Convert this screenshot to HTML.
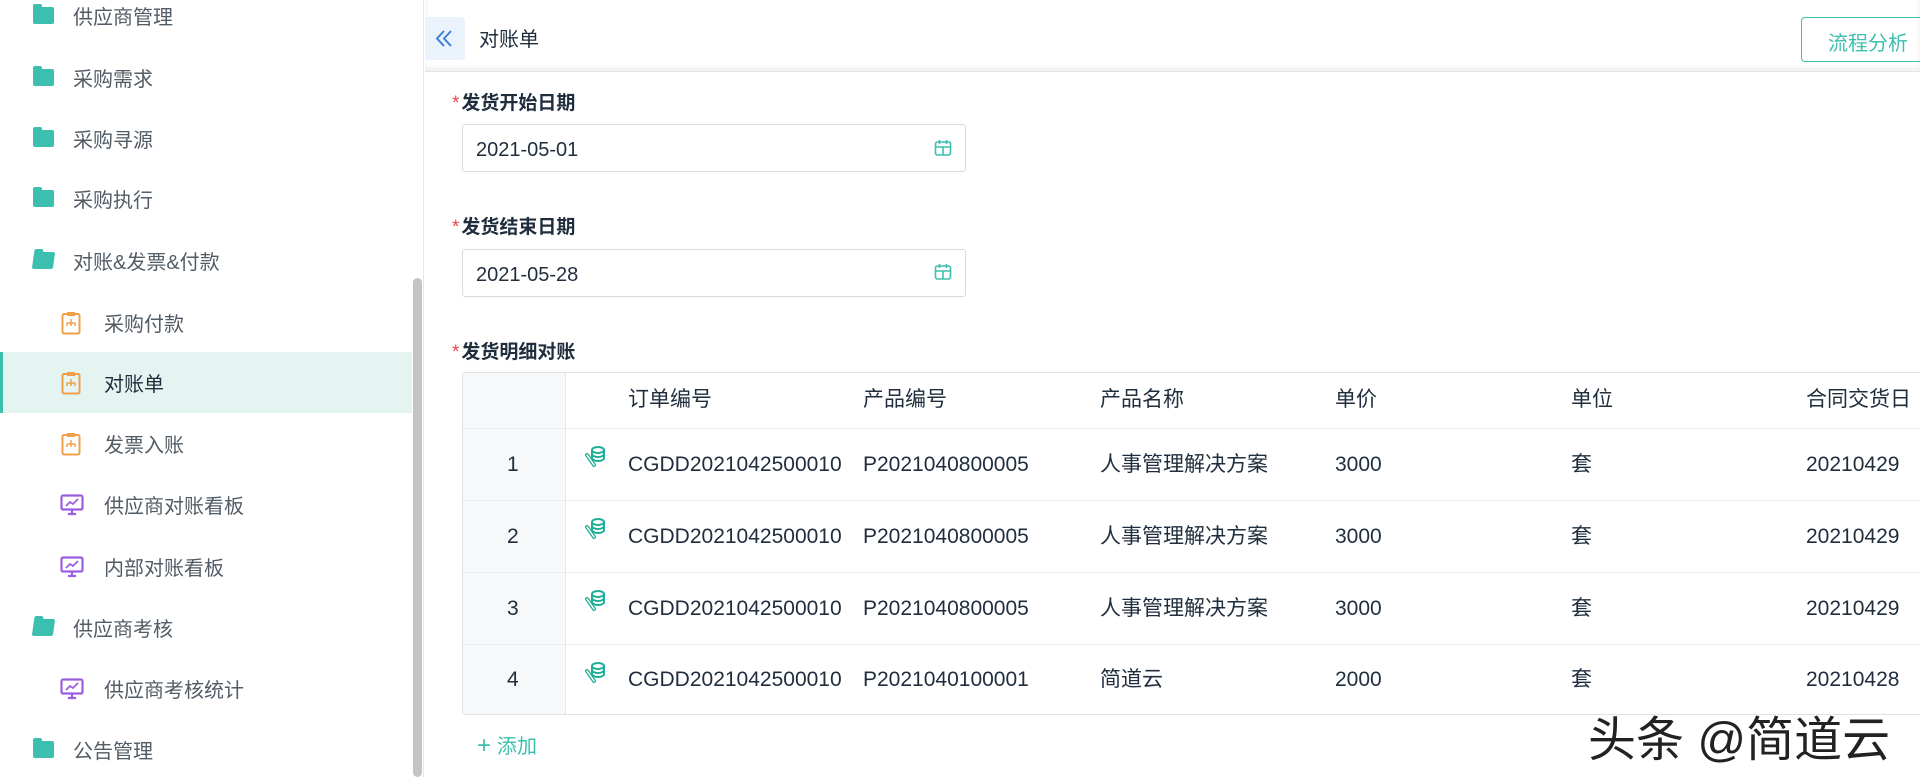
<!DOCTYPE html>
<html><head><meta charset="utf-8"><style>
*{margin:0;padding:0;box-sizing:border-box}
body{width:1920px;height:777px;overflow:hidden;background:#fff;font-family:"Liberation Sans","Noto Sans CJK SC",sans-serif;color:#1f2d3d;position:relative}
.a{position:absolute;white-space:nowrap}
.side{left:0;top:0;width:424px;height:777px;border-right:1px solid #e4e7eb;background:#fff}
.it{position:absolute;left:0;width:412px;height:61px;display:flex;align-items:center;font-size:20px;color:#525c66}
.fold{position:absolute;left:33px;width:21px;height:17px;background:#3cbfae;border-radius:2px}
.fold:before{content:"";position:absolute;left:0;top:-3px;width:9px;height:4px;background:#3cbfae;border-radius:2px 2px 0 0}
.lbl{font-size:19px;font-weight:bold;color:#1f2d3d}
.lbl b{color:#e5484d;font-weight:normal;margin-right:2px}
.inp{left:462px;width:504px;height:48px;border:1px solid #d7dbe0;border-radius:3px;font-size:20px;padding:4px 0 0 13px;display:flex;align-items:center;color:#1f2d3d}
.cell{position:absolute;font-size:21px;line-height:26px;height:26px;color:#1f2d3d}
</style></head><body>
<div class="a side">
 <div class="it" style="top:-15px"><span class="fold"></span><span style="margin-left:73px">供应商管理</span></div>
 <div class="it" style="top:47px"><span class="fold"></span><span style="margin-left:73px">采购需求</span></div>
 <div class="it" style="top:108px"><span class="fold"></span><span style="margin-left:73px">采购寻源</span></div>
 <div class="it" style="top:168px"><span class="fold"></span><span style="margin-left:73px">采购执行</span></div>
 <div class="it" style="top:230px"><span class="fold" style="transform:skewX(-8deg)"></span><span style="margin-left:73px">对账&amp;发票&amp;付款</span></div>
 <div class="it" style="top:292px"><svg style="position:absolute;left:61px" width="20" height="24" viewBox="0 0 20 24"><rect x="1.5" y="3" width="17" height="19.5" rx="1.5" fill="none" stroke="#f0a04b" stroke-width="2"/><rect x="6" y="1" width="8" height="4" fill="#f0a04b"/><path d="M10 8v4M6 12h8M6 12v3M10 12v3M14 12v3" stroke="#f0a04b" stroke-width="1.5"/></svg><span style="margin-left:104px">采购付款</span></div>
 <div class="it" style="top:352px;background:#e4f4f1;border-left:3px solid #3cbfae;width:412px"><svg style="position:absolute;left:58px" width="20" height="24" viewBox="0 0 20 24"><rect x="1.5" y="3" width="17" height="19.5" rx="1.5" fill="none" stroke="#f0a04b" stroke-width="2"/><rect x="6" y="1" width="8" height="4" fill="#f0a04b"/><path d="M10 8v4M6 12h8M6 12v3M10 12v3M14 12v3" stroke="#f0a04b" stroke-width="1.5"/></svg><span style="margin-left:101px;color:#1f2d3d">对账单</span></div>
 <div class="it" style="top:413px"><svg style="position:absolute;left:61px" width="20" height="24" viewBox="0 0 20 24"><rect x="1.5" y="3" width="17" height="19.5" rx="1.5" fill="none" stroke="#f0a04b" stroke-width="2"/><rect x="6" y="1" width="8" height="4" fill="#f0a04b"/><path d="M10 8v4M6 12h8M6 12v3M10 12v3M14 12v3" stroke="#f0a04b" stroke-width="1.5"/></svg><span style="margin-left:104px">发票入账</span></div>
 <div class="it" style="top:474px"><svg style="position:absolute;left:60px" width="24" height="22" viewBox="0 0 24 22"><rect x="1.5" y="1.5" width="21" height="14" rx="1.5" fill="none" stroke="#9a5fe0" stroke-width="2.2"/><path d="M6 12l4-4 3 2 5-5" fill="none" stroke="#9a5fe0" stroke-width="1.8"/><path d="M8 20h8M12 16v4" stroke="#9a5fe0" stroke-width="2.2"/></svg><span style="margin-left:104px">供应商对账看板</span></div>
 <div class="it" style="top:536px"><svg style="position:absolute;left:60px" width="24" height="22" viewBox="0 0 24 22"><rect x="1.5" y="1.5" width="21" height="14" rx="1.5" fill="none" stroke="#9a5fe0" stroke-width="2.2"/><path d="M6 12l4-4 3 2 5-5" fill="none" stroke="#9a5fe0" stroke-width="1.8"/><path d="M8 20h8M12 16v4" stroke="#9a5fe0" stroke-width="2.2"/></svg><span style="margin-left:104px">内部对账看板</span></div>
 <div class="it" style="top:597px"><span class="fold" style="transform:skewX(-8deg)"></span><span style="margin-left:73px">供应商考核</span></div>
 <div class="it" style="top:658px"><svg style="position:absolute;left:60px" width="24" height="22" viewBox="0 0 24 22"><rect x="1.5" y="1.5" width="21" height="14" rx="1.5" fill="none" stroke="#9a5fe0" stroke-width="2.2"/><path d="M6 12l4-4 3 2 5-5" fill="none" stroke="#9a5fe0" stroke-width="1.8"/><path d="M8 20h8M12 16v4" stroke="#9a5fe0" stroke-width="2.2"/></svg><span style="margin-left:104px">供应商考核统计</span></div>
 <div class="it" style="top:719px"><span class="fold"></span><span style="margin-left:73px">公告管理</span></div>
 <div class="a" style="left:413px;top:278px;width:9px;height:499px;background:#c4c4c4;border-radius:5px"></div>
</div>
<div class="a" style="left:425px;top:0;width:1495px;height:72px;border-bottom:1px solid #e2e5e8;box-shadow:0 -3px 6px #f0f0f0 inset"></div>
<div class="a" style="left:425px;top:17px;width:40px;height:43px;background:#eaf3fb;border-radius:3px"><svg width="40" height="43" viewBox="0 0 40 43"><path d="M19 14l-7 7.5 7 7.5M26 14l-7 7.5 7 7.5" fill="none" stroke="#3d7fd6" stroke-width="2"/></svg></div>
<div class="a" style="left:479px;top:23px;font-size:20px;color:#1f2d3d">对账单</div>
<div class="a" style="left:1801px;top:17px;width:125px;height:45px;border:1.5px solid #3cbfae;border-radius:4px;color:#3cbfae;font-size:20px;padding:9px 0 0 26px">流程分析</div>

<div class="a lbl" style="left:452px;top:88px"><b>*</b>发货开始日期</div>
<div class="a inp" style="top:124px">2021-05-01</div>
<div class="a lbl" style="left:452px;top:212px"><b>*</b>发货结束日期</div>
<div class="a inp" style="top:249px">2021-05-28</div>
<svg class="a" style="left:934px;top:139px" width="18" height="18" viewBox="0 0 18 18"><rect x="1.5" y="3" width="15" height="13" rx="2" fill="none" stroke="#3cbfae" stroke-width="1.6"/><path d="M1.5 8h15M9 8v8M5.5 1v4M12.5 1v4" stroke="#3cbfae" stroke-width="1.6"/></svg>
<svg class="a" style="left:934px;top:263px" width="18" height="18" viewBox="0 0 18 18"><rect x="1.5" y="3" width="15" height="13" rx="2" fill="none" stroke="#3cbfae" stroke-width="1.6"/><path d="M1.5 8h15M9 8v8M5.5 1v4M12.5 1v4" stroke="#3cbfae" stroke-width="1.6"/></svg>
<div class="a lbl" style="left:452px;top:337px"><b>*</b>发货明细对账</div>

<div class="a" style="left:462px;top:372px;width:1470px;height:343px;border:1px solid #dfe2e6;border-radius:3px;overflow:hidden">
 <div class="a" style="left:0;top:0;width:103px;height:343px;background:#f7f8fa;border-right:1px solid #e6e8eb"></div>
 <div class="a" style="left:0;top:55px;width:1470px;border-top:1px solid #eceef0"></div>
 <div class="a" style="left:0;top:127px;width:1470px;border-top:1px solid #eceef0"></div>
 <div class="a" style="left:0;top:199px;width:1470px;border-top:1px solid #eceef0"></div>
 <div class="a" style="left:0;top:271px;width:1470px;border-top:1px solid #eceef0"></div>
</div>
<div class="cell" style="left:628px;top:387px">订单编号</div>
<div class="cell" style="left:863px;top:387px">产品编号</div>
<div class="cell" style="left:1100px;top:387px">产品名称</div>
<div class="cell" style="left:1335px;top:387px">单价</div>
<div class="cell" style="left:1571px;top:387px">单位</div>
<div class="cell" style="left:1806px;top:387px">合同交货日</div>

<div class="cell" style="left:507px;top:452px">1</div>
<div class="cell" style="left:507px;top:524px">2</div>
<div class="cell" style="left:507px;top:596px">3</div>
<div class="cell" style="left:507px;top:667px">4</div>

<svg class="a" style="left:585px;top:445px" width="22" height="24" viewBox="0 0 22 24"><ellipse cx="13" cy="5" rx="6" ry="3" fill="none" stroke="#1fae96" stroke-width="2"/><path d="M7 5v8c0 1.7 2.7 3 6 3s6-1.3 6-3V5M7 9c0 1.7 2.7 3 6 3s6-1.3 6-3" fill="none" stroke="#1fae96" stroke-width="2"/><path d="M2 10l7 10" stroke="#1fae96" stroke-width="4" stroke-linecap="round"/><path d="M2 10l7 10" stroke="#fff" stroke-width="1.5" stroke-linecap="round"/></svg>
<svg class="a" style="left:585px;top:517px" width="22" height="24" viewBox="0 0 22 24"><ellipse cx="13" cy="5" rx="6" ry="3" fill="none" stroke="#1fae96" stroke-width="2"/><path d="M7 5v8c0 1.7 2.7 3 6 3s6-1.3 6-3V5M7 9c0 1.7 2.7 3 6 3s6-1.3 6-3" fill="none" stroke="#1fae96" stroke-width="2"/><path d="M2 10l7 10" stroke="#1fae96" stroke-width="4" stroke-linecap="round"/><path d="M2 10l7 10" stroke="#fff" stroke-width="1.5" stroke-linecap="round"/></svg>
<svg class="a" style="left:585px;top:589px" width="22" height="24" viewBox="0 0 22 24"><ellipse cx="13" cy="5" rx="6" ry="3" fill="none" stroke="#1fae96" stroke-width="2"/><path d="M7 5v8c0 1.7 2.7 3 6 3s6-1.3 6-3V5M7 9c0 1.7 2.7 3 6 3s6-1.3 6-3" fill="none" stroke="#1fae96" stroke-width="2"/><path d="M2 10l7 10" stroke="#1fae96" stroke-width="4" stroke-linecap="round"/><path d="M2 10l7 10" stroke="#fff" stroke-width="1.5" stroke-linecap="round"/></svg>
<svg class="a" style="left:585px;top:661px" width="22" height="24" viewBox="0 0 22 24"><ellipse cx="13" cy="5" rx="6" ry="3" fill="none" stroke="#1fae96" stroke-width="2"/><path d="M7 5v8c0 1.7 2.7 3 6 3s6-1.3 6-3V5M7 9c0 1.7 2.7 3 6 3s6-1.3 6-3" fill="none" stroke="#1fae96" stroke-width="2"/><path d="M2 10l7 10" stroke="#1fae96" stroke-width="4" stroke-linecap="round"/><path d="M2 10l7 10" stroke="#fff" stroke-width="1.5" stroke-linecap="round"/></svg>

<div class="cell" style="left:628px;top:452px">CGDD2021042500010</div>
<div class="cell" style="left:863px;top:452px">P2021040800005</div>
<div class="cell" style="left:1100px;top:452px">人事管理解决方案</div>
<div class="cell" style="left:1335px;top:452px">3000</div>
<div class="cell" style="left:1571px;top:452px">套</div>
<div class="cell" style="left:1806px;top:452px">20210429</div>

<div class="cell" style="left:628px;top:524px">CGDD2021042500010</div>
<div class="cell" style="left:863px;top:524px">P2021040800005</div>
<div class="cell" style="left:1100px;top:524px">人事管理解决方案</div>
<div class="cell" style="left:1335px;top:524px">3000</div>
<div class="cell" style="left:1571px;top:524px">套</div>
<div class="cell" style="left:1806px;top:524px">20210429</div>

<div class="cell" style="left:628px;top:596px">CGDD2021042500010</div>
<div class="cell" style="left:863px;top:596px">P2021040800005</div>
<div class="cell" style="left:1100px;top:596px">人事管理解决方案</div>
<div class="cell" style="left:1335px;top:596px">3000</div>
<div class="cell" style="left:1571px;top:596px">套</div>
<div class="cell" style="left:1806px;top:596px">20210429</div>

<div class="cell" style="left:628px;top:667px">CGDD2021042500010</div>
<div class="cell" style="left:863px;top:667px">P2021040100001</div>
<div class="cell" style="left:1100px;top:667px">简道云</div>
<div class="cell" style="left:1335px;top:667px">2000</div>
<div class="cell" style="left:1571px;top:667px">套</div>
<div class="cell" style="left:1806px;top:667px">20210428</div>

<div class="a" style="left:477px;top:730px;font-size:20px;color:#3cbfae"><span style="font-size:24px;margin-right:6px">+</span>添加</div>
<div class="a" style="left:1588px;top:700px;font-size:48px;color:#222;text-shadow:0 0 3px #fff,0 0 3px #fff">头条 @简道云</div>
</body></html>
